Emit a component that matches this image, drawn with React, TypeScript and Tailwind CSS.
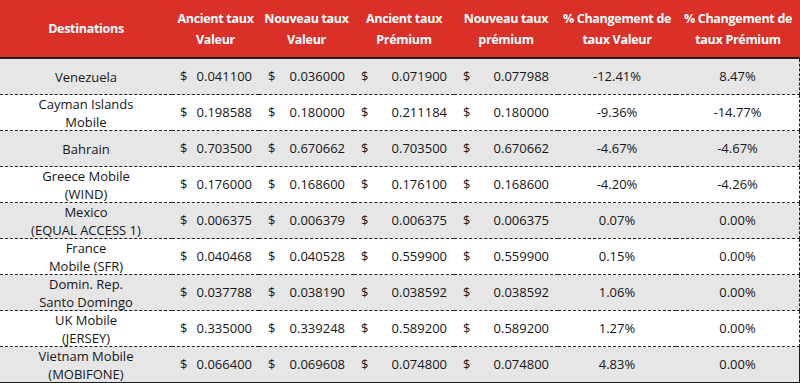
import React from 'react';

type Row = {
  dest: string[];
  av: string;
  nv: string;
  ap: string;
  np: string;
  cv: string;
  cp: string;
};

const rows: Row[] = [
  { dest: ['Venezuela'], av: '0.041100', nv: '0.036000', ap: '0.071900', np: '0.077988', cv: '-12.41%', cp: '8.47%' },
  { dest: ['Cayman Islands', 'Mobile'], av: '0.198588', nv: '0.180000', ap: '0.211184', np: '0.180000', cv: '-9.36%', cp: '-14.77%' },
  { dest: ['Bahrain'], av: '0.703500', nv: '0.670662', ap: '0.703500', np: '0.670662', cv: '-4.67%', cp: '-4.67%' },
  { dest: ['Greece Mobile', '(WIND)'], av: '0.176000', nv: '0.168600', ap: '0.176100', np: '0.168600', cv: '-4.20%', cp: '-4.26%' },
  { dest: ['Mexico', '(EQUAL ACCESS 1)'], av: '0.006375', nv: '0.006379', ap: '0.006375', np: '0.006375', cv: '0.07%', cp: '0.00%' },
  { dest: ['France', 'Mobile (SFR)'], av: '0.040468', nv: '0.040528', ap: '0.559900', np: '0.559900', cv: '0.15%', cp: '0.00%' },
  { dest: ['Domin. Rep.', 'Santo Domingo'], av: '0.037788', nv: '0.038190', ap: '0.038592', np: '0.038592', cv: '1.06%', cp: '0.00%' },
  { dest: ['UK Mobile', '(JERSEY)'], av: '0.335000', nv: '0.339248', ap: '0.589200', np: '0.589200', cv: '1.27%', cp: '0.00%' },
  { dest: ['Vietnam Mobile', '(MOBIFONE)'], av: '0.066400', nv: '0.069608', ap: '0.074800', np: '0.074800', cv: '4.83%', cp: '0.00%' },
];

const headers = [
  ['Destinations'],
  ['Ancient taux', 'Valeur'],
  ['Nouveau taux', 'Valeur'],
  ['Ancient taux', 'Prémium'],
  ['Nouveau taux', 'prémium'],
  ['% Changement de', 'taux Valeur'],
  ['% Changement de', 'taux Prémium'],
];

// column widths, same order as headers
const widths = ['w-[172px]', 'w-[87px]', 'w-[95px]', 'w-[100px]', 'w-[104px]', 'w-[118px]', 'w-[124px]'];

function Money({ value, pad }: { value: string; pad: string }) {
  return (
    <div className={`h-[35px] flex items-center justify-between ${pad}`}>
      <span>$</span>
      <span>{value}</span>
    </div>
  );
}

export default function App() {
  return (
    <div
      className="w-[800px] h-[383px] bg-white overflow-hidden"
      style={{ fontFamily: '"Open Sans", "Noto Sans", sans-serif' }}
    >
      <table className="w-[800px] table-fixed border-separate border-spacing-0 text-[13px] text-[#161616]">
        <colgroup>
          {widths.map((w, i) => (
            <col key={i} className={w} />
          ))}
        </colgroup>
        <thead>
          <tr>
            {headers.map((h, i) => (
              <th
                key={i}
                className="h-[59px] bg-[#da3028] text-white font-bold text-[12.5px] leading-[21px] tracking-[-0.3px] whitespace-nowrap text-center align-middle border-b-2 border-[#1e1e1e] p-0"
              >
                {h.map((line, j) => (
                  <div key={j}>{line}</div>
                ))}
              </th>
            ))}
          </tr>
        </thead>
        <tbody>
          {rows.map((r, i) => {
            const last = i === rows.length - 1;
            const bg = i % 2 === 0 ? 'bg-[#e7e6e6]' : 'bg-white';
            const bb = last ? 'border-b border-solid border-[#1e1e1e]' : 'border-b border-dashed border-[#1e1e1e]';
            const cell = `h-[36px] p-0 align-middle ${bg} ${bb}`;
            return (
              <tr key={i}>
                <td className={cell}>
                  <div className="h-[35px] flex flex-col items-center justify-center leading-[18px] whitespace-nowrap">
                    {r.dest.map((l, j) => (
                      <div key={j}>{l}</div>
                    ))}
                  </div>
                </td>
                <td className={cell}>
                  <Money value={r.av} pad="pl-2 pr-[7px]" />
                </td>
                <td className={cell}>
                  <Money value={r.nv} pad="pl-[9px] pr-[9px]" />
                </td>
                <td className={cell}>
                  <Money value={r.ap} pad="pl-[7px] pr-[7px]" />
                </td>
                <td className={cell}>
                  <Money value={r.np} pad="pl-[9px] pr-[9px]" />
                </td>
                <td className={cell}>
                  <div className="h-[35px] flex items-center justify-center">{r.cv}</div>
                </td>
                <td className={`${cell} border-r border-r-[#1e1e1e]`}>
                  <div className="h-[35px] flex items-center justify-center">{r.cp}</div>
                </td>
              </tr>
            );
          })}
        </tbody>
      </table>
    </div>
  );
}
